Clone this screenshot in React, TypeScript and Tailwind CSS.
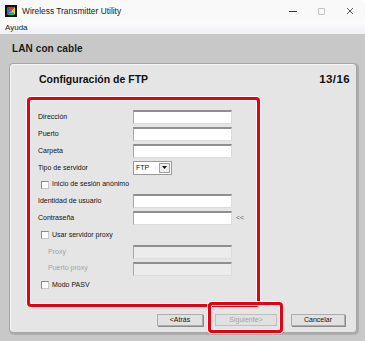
import React from "react"

const rows = [
  { label: "Dirección", kind: "input" },
  { label: "Puerto", kind: "input" },
  { label: "Carpeta", kind: "input" },
  { label: "Tipo de servidor", kind: "select" },
  { label: "Inicio de sesión anónimo", kind: "check" },
  { label: "Identidad de usuario", kind: "input" },
  { label: "Contraseña", kind: "password" },
  { label: "Usar servidor proxy", kind: "check" },
  { label: "Proxy", kind: "disabled" },
  { label: "Puerto proxy", kind: "disabled" },
  { label: "Modo PASV", kind: "check" },
]

function AppIcon() {
  return (
    <svg width="12" height="12" viewBox="0 0 12 12">
      <rect x="0" y="0" width="12" height="12" fill="#111" />
      <polygon points="2,2 10,2 6,6" fill="#e8262b" />
      <polygon points="10,2 10,10 6,6" fill="#f4c61c" />
      <polygon points="10,10 2,10 6,6" fill="#2bb34a" />
      <polygon points="2,10 2,2 6,6" fill="#2d6fd6" />
      <polygon points="4,4 8,4 6,6" fill="#c040c0" />
      <polygon points="8,8 4,8 6,6" fill="#40c8e8" />
    </svg>
  )
}

function TextBox({ disabled }: { disabled?: boolean }) {
  return (
    <div
      className={`w-[99px] h-[14px] border border-t-[2px] border-t-[#8f8f8f] border-l-[#a8a8a8] border-r-[#dcdcdc] border-b-[#dcdcdc] ${
        disabled ? "bg-[#ececec]" : "bg-white"
      }`}
    />
  )
}

function CheckBox() {
  return <div className="w-[8px] h-[8px] bg-white border border-[#8a8a8a] border-r-[#c8c8c8] border-b-[#c8c8c8]" />
}

export default function App() {
  return (
    <div className="relative w-[365px] h-[341px] overflow-hidden bg-white flex flex-col font-['Liberation_Sans',Arial,sans-serif] text-[#111]">
      {/* title bar */}
      <div className="h-[22px] bg-[#f9f9f9] flex items-center rounded-t-[6px]">
        <div className="ml-[5px] mr-[5px]">
          <AppIcon />
        </div>
        <span className="text-[8.4px] text-[#222]">Wireless Transmitter Utility</span>
        <div className="ml-auto flex items-center h-full">
          <div className="w-[28px] flex justify-center">
            <div className="w-[8px] h-[1px] bg-[#333]" />
          </div>
          <div className="w-[28px] flex justify-center">
            <div className="w-[7px] h-[7px] border border-[#c4c4c4] rounded-[1px]" />
          </div>
          <div className="w-[30px] flex justify-center">
            <svg width="8" height="8" viewBox="0 0 8 8">
              <path d="M1 1L7 7M7 1L1 7" stroke="#444" strokeWidth="0.9" />
            </svg>
          </div>
        </div>
      </div>

      {/* menu bar */}
      <div className="h-[12px] bg-gradient-to-b from-[#fbfbfc] to-[#eef0f3] flex items-center pl-[5px]">
        <span className="text-[8px] text-[#222]">Ayuda</span>
      </div>

      {/* body */}
      <div className="flex-1 bg-[#c8c8c8] flex flex-col">
        <div className="h-[29px] flex items-center pl-[12px]">
          <span className="text-[10px] font-bold text-[#1a1a1a] tracking-[0.1px]">LAN con cable</span>
        </div>

        <div className="ml-[9px] w-[348px] h-[270px] rounded-[4px] bg-[#e5e5e5] border border-[#a4a4a4] shadow-[1px_1px_0_1px_#adadad,inset_1px_1px_0_#f4f4f4] flex flex-col">
          <div className="h-[31px] flex items-center justify-between pl-[29px] pr-[6px]">
            <span className="text-[10.5px] font-bold">Configuración de FTP</span>
            <span className="text-[11.5px] font-bold tracking-[0.4px]">13/16</span>
          </div>

          <div className="mt-[14px] pl-[28px] flex flex-col text-[7px]">
            {rows.map((r) => (
              <div key={r.label} className="h-[16.8px] flex items-center">
                {r.kind === "check" ? (
                  <div className="flex items-center pl-[3px]">
                    <CheckBox />
                    <span className="ml-[3px]">{r.label}</span>
                  </div>
                ) : (
                  <>
                    <span
                      className={`w-[95px] ${r.kind === "disabled" ? "pl-[10px] text-[#a2a2a2]" : ""}`}
                    >
                      {r.label}
                    </span>
                    {r.kind === "select" ? (
                      <div className="w-[39px] h-[14px] bg-white border border-[#9a9a9a] flex items-center">
                        <span className="pl-[2px] flex-1">FTP</span>
                        <div className="w-[11px] h-[10px] mr-[1px] bg-[#ececec] border border-[#a0a0a0] flex items-center justify-center">
                          <svg width="5" height="3" viewBox="0 0 5 3">
                            <polygon points="0,0 5,0 2.5,3" fill="#111" />
                          </svg>
                        </div>
                      </div>
                    ) : (
                      <TextBox disabled={r.kind === "disabled"} />
                    )}
                    {r.kind === "password" && (
                      <span className="ml-[4px] text-[7px] text-[#5a6680]">&lt;&lt;</span>
                    )}
                  </>
                )}
              </div>
            ))}
          </div>

          <div className="mt-auto mb-[6px] flex justify-end pr-[11px] text-[7px]">
            <button className="w-[46px] h-[12px] bg-[#e1e1e1] border border-[#adadad] shadow-[1px_1px_0_#8a8a8a] flex items-center justify-center">
              &lt;Atrás
            </button>
            <button className="ml-[12px] w-[62px] h-[12px] bg-[#e1e1e1] border border-[#bfbfbf] text-[#a3a3a3] flex items-center justify-center">
              Siguiente&gt;
            </button>
            <button className="ml-[14px] w-[54px] h-[12px] bg-[#e1e1e1] border border-[#adadad] shadow-[1px_1px_0_#8a8a8a] flex items-center justify-center">
              Cancelar
            </button>
          </div>
        </div>
      </div>

      {/* red highlight annotations */}
      <div className="absolute left-[27px] top-[97px] w-[233px] h-[210px] border-[3px] border-[#e60012] rounded-[4px] shadow-[0_0_0_1px_#fff,inset_0_0_0_1px_#fff]" />
      <div className="absolute left-[208px] top-[302px] w-[75px] h-[31px] border-[3px] border-[#e60012] rounded-[4px] shadow-[0_0_0_1px_#fff,inset_0_0_0_1px_#fff]" />
    </div>
  )
}
